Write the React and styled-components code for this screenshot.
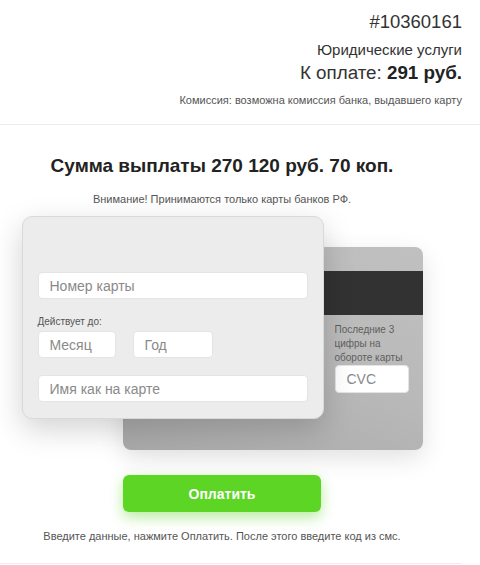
import React from "react";
import styled, { createGlobalStyle } from "styled-components";

const Global = createGlobalStyle`
  html, body { margin: 0; padding: 0; background: #fff; }
  body { font-family: "Liberation Sans", Arial, sans-serif; color: #333; }
  * { box-sizing: border-box; }
`;

const Page = styled.div`
  width: 480px;
  display: flex;
  flex-direction: column;
`;

const Header = styled.header`
  display: flex;
  flex-direction: column;
  align-items: flex-end;
  padding: 11px 18px 17px 0;
  border-bottom: 1px solid #ececf4;
`;

const OrderId = styled.div`
  font-size: 18.5px;
  line-height: 22px;
  color: #333;
`;

const Service = styled.div`
  margin-top: 8px;
  font-size: 15px;
  line-height: 18px;
  color: #333;
`;

const Amount = styled.div`
  margin-top: 3px;
  font-size: 18.8px;
  line-height: 22px;
  color: #333;
  b { font-weight: bold; color: #222; }
`;

const Fee = styled.div`
  margin-top: 9px;
  font-size: 11px;
  line-height: 14px;
  color: #555;
`;

const Main = styled.main`
  width: 462px;
  border-bottom: 1px solid #ececf4;
  padding-bottom: 20px;
`;

const Column = styled.div`
  width: 444px;
  display: flex;
  flex-direction: column;
  align-items: center;
  padding-top: 29px;
`;

const Title = styled.h1`
  margin: 0;
  font-size: 19px;
  line-height: 24px;
  font-weight: bold;
  color: #222;
`;

const Notice = styled.p`
  margin: 14px 0 0;
  font-size: 11px;
  line-height: 14px;
  color: #555;
`;

const Cards = styled.div`
  display: grid;
  margin-top: 10px;
  width: 401px;
`;

const BackCard = styled.div`
  grid-area: 1 / 1;
  margin: 31px 0 0 101px;
  width: 300px;
  height: 203px;
  border-radius: 8px;
  background: linear-gradient(200deg, #c0c0c0 0%, #b9b9b9 50%, #a9a9a9 100%);
  box-shadow: 0 8px 24px rgba(0, 0, 0, 0.12);
  padding-top: 24px;
  display: flex;
  flex-direction: column;
`;

const Stripe = styled.div`
  height: 44px;
  background: #323232;
`;

const BackContent = styled.div`
  padding: 8px 0 0 212px;
  display: flex;
  flex-direction: column;
`;

const Hint = styled.div`
  font-size: 10px;
  line-height: 14px;
  color: #5f5f5f;
  width: 80px;
`;

const FrontCard = styled.div`
  grid-area: 1 / 1;
  align-self: start;
  width: 302px;
  height: 203px;
  border-radius: 10px;
  background: #ececec;
  border: 1px solid #d9d9d9;
  box-shadow: 0 10px 30px rgba(0, 0, 0, 0.18);
  padding: 55px 15px 0 15px;
  display: flex;
  flex-direction: column;
  z-index: 1;
`;

const Field = styled.input`
  display: block;
  width: ${(p) => p.$w || 270}px;
  height: ${(p) => p.$h || 27}px;
  border: 1px solid #e4e4e4;
  border-radius: 4px;
  background: #fff;
  padding: 0 0 0 11px;
  font-family: "Liberation Sans", Arial, sans-serif;
  font-size: 14px;
  color: #333;
  outline: none;
  &::placeholder { color: #8a8a8a; }
`;

const Label = styled.div`
  margin-top: 17px;
  font-size: 10px;
  line-height: 12px;
  color: #555;
`;

const DateRow = styled.div`
  display: flex;
  gap: 17px;
  margin-top: 3px;
  margin-bottom: 17px;
`;

const PayButton = styled.button`
  margin-top: 25px;
  width: 198px;
  height: 37px;
  border: none;
  border-radius: 6px;
  background: #5cd524;
  box-shadow: 0 5px 14px rgba(92, 213, 36, 0.45);
  color: #fff;
  font-family: "Liberation Sans", Arial, sans-serif;
  font-weight: bold;
  font-size: 14px;
  cursor: pointer;
`;

const Footnote = styled.p`
  margin: 17px 0 0;
  font-size: 11px;
  line-height: 14px;
  color: #555;
`;

export default function App() {
  return (
    <Page>
      <Global />
      <Header>
        <OrderId>#10360161</OrderId>
        <Service>Юридические услуги</Service>
        <Amount>
          К оплате: <b>291 руб.</b>
        </Amount>
        <Fee>Комиссия: возможна комиссия банка, выдавшего карту</Fee>
      </Header>
      <Main>
        <Column>
          <Title>Сумма выплаты 270 120 руб. 70 коп.</Title>
          <Notice>Внимание! Принимаются только карты банков РФ.</Notice>
          <Cards>
            <BackCard>
              <Stripe />
              <BackContent>
                <Hint>Последние 3 цифры на обороте карты</Hint>
                <Field $w={74} $h={28} placeholder="CVC" />
              </BackContent>
            </BackCard>
            <FrontCard>
              <Field placeholder="Номер карты" />
              <Label>Действует до:</Label>
              <DateRow>
                <Field $w={78} placeholder="Месяц" />
                <Field $w={80} placeholder="Год" />
              </DateRow>
              <Field placeholder="Имя как на карте" />
            </FrontCard>
          </Cards>
          <PayButton>Оплатить</PayButton>
          <Footnote>Введите данные, нажмите Оплатить. После этого введите код из смс.</Footnote>
        </Column>
      </Main>
    </Page>
  );
}
